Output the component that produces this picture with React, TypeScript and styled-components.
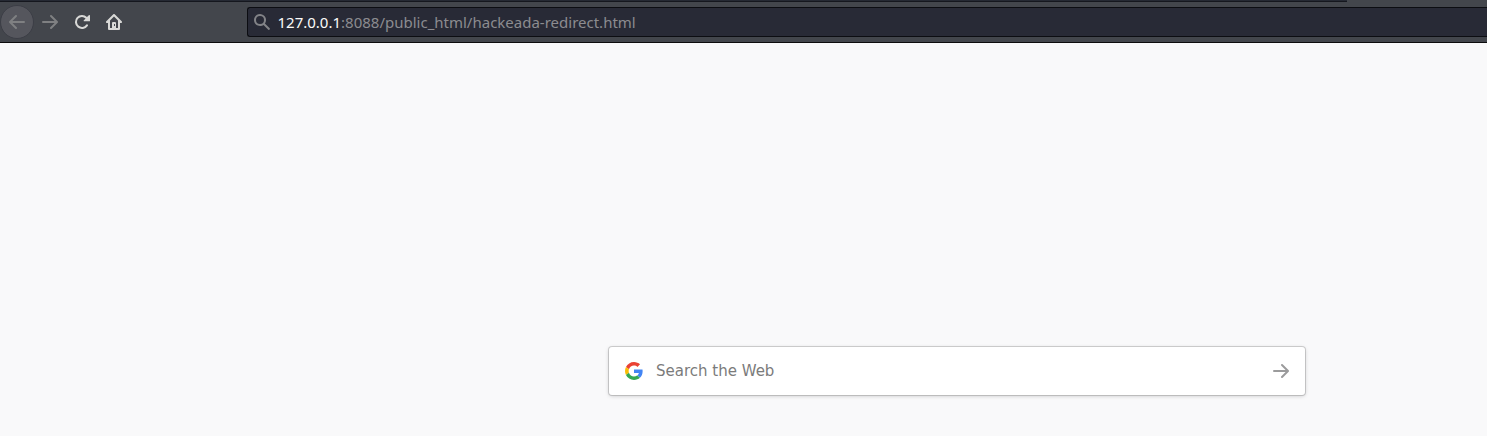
import React from "react";
import styled, { createGlobalStyle } from "styled-components";

const GlobalStyle = createGlobalStyle`
  * { box-sizing: border-box; }
  html, body { margin: 0; background: #f9f9fa; overflow: hidden; }
`;

const Page = styled.div`
  display: flex;
  flex-direction: column;
  height: 436px;
  background: #f9f9fa;
`;

const TabEdge = styled.div`
  width: 1347px;
  height: 2px;
  background: #252933;
  border-bottom: 1px solid #15171e;
`;

const Chrome = styled.header`
  height: 43px;
  flex: none;
  background: #43464c;
  border-bottom: 1px solid #0c0c0d;
`;

const Toolbar = styled.div`
  display: flex;
  align-items: flex-start;
  padding-top: 5px;
`;

const NavButton = styled.button<{ $round?: boolean; $dim?: boolean }>`
  display: flex;
  align-items: center;
  justify-content: center;
  width: 34px;
  height: 34px;
  margin: -2px ${(p) => (p.$round ? "-1px" : "-2px")} 0 0;
  padding: 0;
  border-radius: 50%;
  border: 1px solid ${(p) => (p.$round ? "#3c3e46" : "transparent")};
  background: ${(p) => (p.$round ? "#55565d" : "transparent")};
  color: ${(p) => (p.$dim ? "#7f8082" : "#d9d9d7")};
`;

const UrlBar = styled.div`
  display: flex;
  align-items: center;
  flex: 1;
  height: 30px;
  margin-left: 118px;
  padding-left: 6px;
  background: #282a36;
  border: 1px solid #0c0d12;
  border-right: 0;
  border-radius: 3px 0 0 3px;
  color: #828387;
`;

const Url = styled.span`
  margin-left: 7.5px;
  font: 15px/20px "Noto Sans", sans-serif;
  color: #8c8c90;
  white-space: nowrap;
`;

const Host = styled.span`
  color: #fcfcfa;
`;

const Content = styled.main`
  flex: 1;
  padding: 304px 0 0 609px;
`;

const SearchBox = styled.div`
  display: flex;
  align-items: center;
  width: 696px;
  height: 48px;
  padding: 0 16px;
  background: #fff;
  border-radius: 3px;
  box-shadow: 0 1px 4px 0 rgba(12, 12, 13, 0.2), 0 0 0 1px rgba(0, 0, 0, 0.15);
`;

const Placeholder = styled.span`
  flex: 1;
  margin-left: 13px;
  font: 15px/20px "DejaVu Sans", sans-serif;
  color: #7b7b7b;
`;

const Icon = ({ d, size = 16, color = "currentColor" }: { d: string; size?: number; color?: string }) => (
  <svg width={size} height={size} viewBox="0 0 16 16" fill={color} fillRule="evenodd">
    <path d={d} />
  </svg>
);

const BACK =
  "M15 7H3.414l4.293-4.293a1 1 0 0 0-1.414-1.414l-6 6a1 1 0 0 0 0 1.414l6 6a1 1 0 0 0 1.414-1.414L3.414 9H15a1 1 0 0 0 0-2z";
const FORWARD =
  "M1 7h11.586L8.293 2.707a1 1 0 0 1 1.414-1.414l6 6a1 1 0 0 1 0 1.414l-6 6a1 1 0 0 1-1.414-1.414L12.586 9H1a1 1 0 0 1 0-2z";
const RELOAD =
  "M15.4 1.1a.6.6 0 0 0-.6.2l-1.8 1.8A7 7 0 1 0 13.8 11.9a1 1 0 0 0-1.7-1.1A5 5 0 1 1 11.6 4.5L9.9 6.2a.6.6 0 0 0 .4 1.1h5.1a.6.6 0 0 0 .6-.6V1.7a.6.6 0 0 0-.6-.6z";
const HOME =
  "M8.7.3a1 1 0 0 0-1.4 0l-7 7A1 1 0 0 0 1 9h1v6a1 1 0 0 0 1 1h10a1 1 0 0 0 1-1V9h1a1 1 0 0 0 .7-1.7zM12 14h-2V9a1 1 0 0 0-1-1H7a1 1 0 0 0-1 1v5H4V6.4l4-4 4 4zM8 10h1v2H8z";
const MAGNIFIER =
  "M15.7 14.3l-4.8-4.8a6 6 0 1 0-1.4 1.4l4.8 4.8a1 1 0 0 0 1.4-1.4zM6 10a4 4 0 1 1 0-8 4 4 0 0 1 0 8z";

const GoogleLogo = () => (
  <svg width="18" height="18" viewBox="0 0 48 48">
    <path fill="#EA4335" d="M24 9.5c3.54 0 6.71 1.22 9.21 3.6l6.85-6.85C35.9 2.38 30.47 0 24 0 14.62 0 6.51 5.38 2.56 13.22l7.98 6.19C12.43 13.72 17.74 9.5 24 9.5z" />
    <path fill="#4285F4" d="M46.98 24.55c0-1.57-.15-3.09-.38-4.55H24v9.02h12.94c-.58 2.96-2.26 5.48-4.78 7.18l7.73 6c4.51-4.18 7.09-10.36 7.09-17.65z" />
    <path fill="#FBBC05" d="M10.53 28.59c-.48-1.45-.76-2.99-.76-4.59s.27-3.14.76-4.59l-7.98-6.19C.92 16.46 0 20.12 0 24s.92 7.54 2.56 10.78z" />
    <path fill="#34A853" d="M24 48c6.48 0 11.93-2.13 15.89-5.81l-7.73-6c-2.15 1.45-4.92 2.3-8.16 2.3-6.26 0-11.57-4.22-13.47-9.91l-7.98 6.19C6.51 42.62 14.62 48 24 48z" />
  </svg>
);

export default function App() {
  return (
    <Page>
      <GlobalStyle />
      <Chrome>
        <TabEdge />
        <Toolbar>
          <NavButton $round $dim aria-label="Back"><Icon d={BACK} /></NavButton>
          <NavButton $dim aria-label="Forward"><Icon d={FORWARD} /></NavButton>
          <NavButton aria-label="Reload"><Icon d={RELOAD} /></NavButton>
          <NavButton aria-label="Home"><Icon d={HOME} /></NavButton>
          <UrlBar>
            <Icon d={MAGNIFIER} />
            <Url><Host>127.0.0.1</Host>:8088/public_html/hackeada-redirect.html</Url>
          </UrlBar>
        </Toolbar>
      </Chrome>
      <Content>
        <SearchBox>
          <GoogleLogo />
          <Placeholder>Search the Web</Placeholder>
          <Icon d={FORWARD} color="#9b9b9c" />
        </SearchBox>
      </Content>
    </Page>
  );
}
